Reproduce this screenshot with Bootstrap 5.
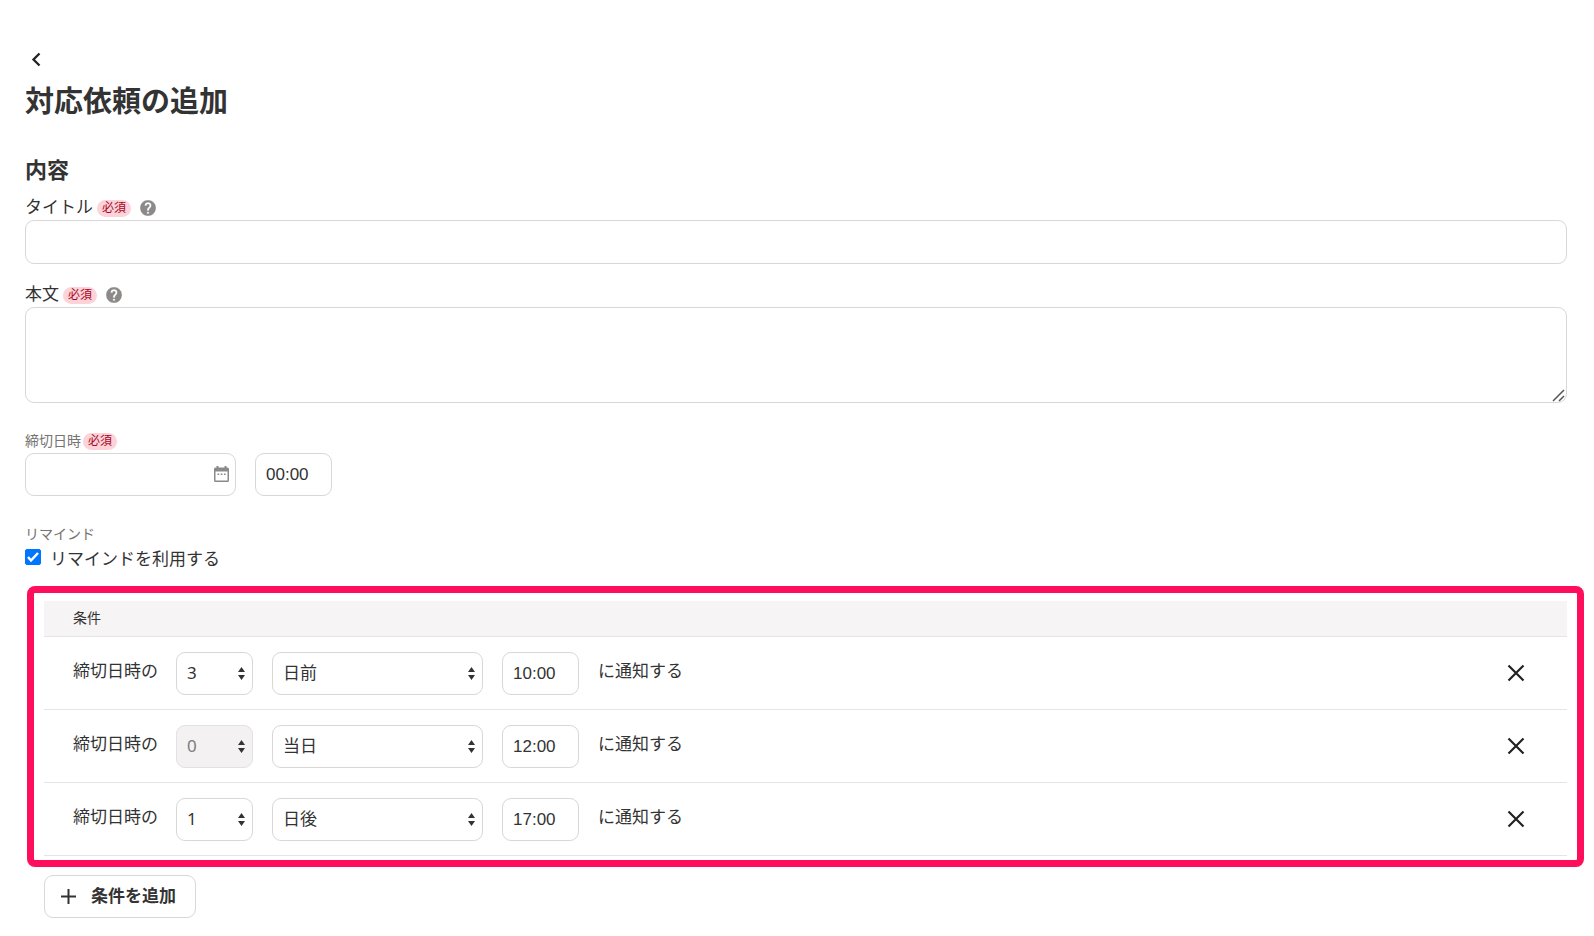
<!DOCTYPE html>
<html lang="ja">
<head>
<meta charset="utf-8">
<meta name="viewport" content="width=device-width, initial-scale=1">
<title>対応依頼の追加</title>
<link href="https://cdn.jsdelivr.net/npm/bootstrap@5.3.0/dist/css/bootstrap.min.css" rel="stylesheet">
<style>
  body { font-family: "Liberation Sans", "Noto Sans CJK JP", sans-serif; font-size: 17px; line-height: 24px; color: #333; background: #fff; }
  .page { padding: 48px 27px 16px 25px; }
  .page-title { font-size: 29px; line-height: 40px; margin: 10px 0 33px; }
  .section-title { font-size: 22px; line-height: 32px; margin: 0 0 9px; }
  .icon-btn { width: 24px; height: 24px; color: #222; background: none; }
  .field-label { height: 24px; }
  .field-label.minor, .minor-text { font-size: 14px; color: #767370; }
  .next-field { margin-top: 19px; }
  .next-group { margin-top: 26px; }
  .required-tag { font-size: 12px; line-height: 17px; padding: 0 5px; border-radius: 9px; background: #fbd3d9; color: #a8071f; }
  .minor .required-tag { margin-left: 2px; }
  .help-btn { width: 16px; height: 16px; color: #8c8989; background: none; margin-left: 9px; }
  .form-control, .form-select { height: 43px; border: 1px solid #d9d7d7; border-radius: 9px; font-size: 17px; line-height: 24px; padding: 8px 10px; color: #333; }
  .form-control.title-box { height: 44px; }
  textarea.form-control { height: 96px; min-height: 96px; }
  textarea::-webkit-resizer { background: url("data:image/svg+xml,%3Csvg xmlns='http://www.w3.org/2000/svg' viewBox='0 0 15 15'%3E%3Cpath d='M2 14L13 3M8 14L13 9' stroke='%23555' stroke-width='1.500'/%3E%3C/svg%3E") center / 15px 15px no-repeat; }
  .form-select { font-family: "Noto Sans", "Noto Sans CJK JP", sans-serif; padding: 7px 20px 9px 10px; background-image: url("data:image/svg+xml,%3Csvg xmlns='http://www.w3.org/2000/svg' viewBox='0 0 7 13'%3E%3Cpath d='M0 5L3.500 0L7 5zM0 8L3.500 13L7 8z' fill='%23333'/%3E%3C/svg%3E"); background-size: 7px 13px; background-position: right 7px center; }
  .form-select:disabled { background-color: #f3f1f2; border-color: #e3e1e1; color: #7d7b7b; opacity: 1; }
  .w-short { width: 77px; }
  .w-long { width: 211px; }
  .gap-control { gap: 19px; }
  .rule-lead { width: 84px; }
  .rule-text { padding-bottom: 3px; }
  .calendar { top: 13px; right: 7px; width: 15px; height: 16px; color: #8c8989; background: none; }
  .form-check-input.remind-check { width: 16px; height: 16px; margin: 3px 9px 0 0; border-radius: 2px; }
  .form-check-input.remind-check:checked { background-color: #0075ff; border-color: #0075ff; background-image: url("data:image/svg+xml,%3Csvg xmlns='http://www.w3.org/2000/svg' viewBox='0 0 14 14'%3E%3Cpath d='M2 7L5 10.500L12 3' fill='none' stroke='%23fff' stroke-width='2.500'/%3E%3C/svg%3E"); }
  .remind-row { padding-bottom: 14px; }
  .remind-row label { padding-top: 2px; }
  .rules-frame { border: 7px solid #ff0f5b; border-radius: 8px; padding: 8px 10px 4px; margin: 0 -17px 8px 2px; }
  .rules-table { color: #333; border-color: #e6e4e4; }
  .rules-table th { font-size: 14px; font-weight: 400; line-height: 19px; padding: 8px 29px; background: #f6f4f5; }
  .rules-table td { padding: 15px 39px 14px 29px; }
  .remove-btn { margin-bottom: 2px; }
  .add-row { padding-left: 19px; }
  .add-btn { height: 43px; padding: 0 19px 0 15px; border: 1px solid #d9d7d7; border-radius: 9px; font-size: 17px; color: #333; gap: 14px; }
</style>
</head>
<body>
<main class="page container-fluid">
  <button type="button" class="icon-btn border-0 p-0 d-block" aria-label="戻る">
    <svg class="d-block" width="24" height="24" viewBox="0 0 24 24" fill="none" stroke="currentColor" stroke-width="2.300"><path d="M14.500 5.500L8.500 11.500L14.500 17.500"/></svg>
  </button>
  <h1 class="page-title fw-bold">対応依頼の追加</h1>

  <h2 class="section-title fw-bold">内容</h2>
  <div class="field-label d-flex align-items-center">
    <label for="title">タイトル</label><span class="required-tag ms-1">必須</span>
    <button type="button" class="help-btn border-0 p-0" aria-label="タイトルのヘルプ"><svg class="d-block" width="16" height="16" viewBox="2 2 20 20" fill="currentColor"><path d="M12 2a10 10 0 1 0 0 20a10 10 0 0 0 0-20zm1 17h-2v-2h2zm2.07-7.75l-.9.92C13.45 12.9 13 13.5 13 15h-2v-.5c0-1.1.45-2.1 1.17-2.83l1.24-1.26A2 2 0 1 0 10 9H8a4 4 0 1 1 8 0c0 .88-.36 1.68-.93 2.25z" stroke="#fff" stroke-width=".3"/></svg></button>
  </div>
  <input type="text" id="title" class="form-control title-box">

  <div class="field-label next-field d-flex align-items-center">
    <label for="bodytext">本文</label><span class="required-tag ms-1">必須</span>
    <button type="button" class="help-btn border-0 p-0" aria-label="本文のヘルプ"><svg class="d-block" width="16" height="16" viewBox="2 2 20 20" fill="currentColor"><path d="M12 2a10 10 0 1 0 0 20a10 10 0 0 0 0-20zm1 17h-2v-2h2zm2.07-7.75l-.9.92C13.45 12.9 13 13.5 13 15h-2v-.5c0-1.1.45-2.1 1.17-2.83l1.24-1.26A2 2 0 1 0 10 9H8a4 4 0 1 1 8 0c0 .88-.36 1.68-.93 2.25z" stroke="#fff" stroke-width=".3"/></svg></button>
  </div>
  <textarea id="bodytext" class="form-control d-block"></textarea>

  <div class="field-label minor next-group d-flex align-items-center">
    <label for="due-date">締切日時</label><span class="required-tag">必須</span>
  </div>
  <div class="d-flex gap-control">
    <div class="position-relative w-long">
      <input type="text" id="due-date" class="form-control">
      <button type="button" class="calendar position-absolute border-0 p-0" aria-label="日付を選択"><svg class="d-block" width="15" height="16" viewBox="0 0 15 16" fill="currentColor"><path fill-rule="evenodd" d="M2.500 0h2v1.500h6V0h2v1.500h1A1.500 1.500 0 0 1 15 3v11.500a1.500 1.500 0 0 1-1.500 1.500h-12A1.500 1.500 0 0 1 0 14.500V3a1.500 1.500 0 0 1 1.500-1.500h1zM1.500 5.500v9h12v-9zM3.500 7.500h1.700V9H3.500zM6.700 7.500h1.700V9H6.700zM9.900 7.500h1.700V9H9.900z"/></svg></button>
    </div>
    <input type="text" class="form-control w-short" value="00:00" aria-label="締切時刻">
  </div>

  <div class="minor-text next-group">リマインド</div>
  <div class="remind-row d-flex">
    <input type="checkbox" id="remind" class="form-check-input remind-check" checked>
    <label for="remind">リマインドを利用する</label>
  </div>

  <section class="rules-frame" aria-label="リマインド条件">
    <table class="table rules-table mb-0">
      <thead><tr><th scope="col">条件</th></tr></thead>
      <tbody>
        <tr>
          <td>
            <div class="d-flex align-items-center gap-control">
              <span class="rule-lead rule-text text-nowrap">締切日時の</span>
              <select class="form-select w-short" aria-label="日数"><option>3</option></select>
              <select class="form-select w-long" aria-label="基準日"><option>日前</option></select>
              <input type="text" class="form-control w-short" value="10:00" aria-label="通知時刻">
              <span class="rule-text">に通知する</span>
              <button type="button" class="icon-btn remove-btn border-0 p-0 ms-auto" aria-label="条件を削除"><svg class="d-block" width="24" height="24" viewBox="0 0 24 24" stroke="currentColor" stroke-width="2.200"><path d="M4.500 4.500L19.500 19.500M19.500 4.500L4.500 19.500"/></svg></button>
            </div>
          </td>
        </tr>
        <tr>
          <td>
            <div class="d-flex align-items-center gap-control">
              <span class="rule-lead rule-text text-nowrap">締切日時の</span>
              <select class="form-select w-short" aria-label="日数" disabled><option>0</option></select>
              <select class="form-select w-long" aria-label="基準日"><option>当日</option></select>
              <input type="text" class="form-control w-short" value="12:00" aria-label="通知時刻">
              <span class="rule-text">に通知する</span>
              <button type="button" class="icon-btn remove-btn border-0 p-0 ms-auto" aria-label="条件を削除"><svg class="d-block" width="24" height="24" viewBox="0 0 24 24" stroke="currentColor" stroke-width="2.200"><path d="M4.500 4.500L19.500 19.500M19.500 4.500L4.500 19.500"/></svg></button>
            </div>
          </td>
        </tr>
        <tr>
          <td>
            <div class="d-flex align-items-center gap-control">
              <span class="rule-lead rule-text text-nowrap">締切日時の</span>
              <select class="form-select w-short" aria-label="日数"><option>1</option></select>
              <select class="form-select w-long" aria-label="基準日"><option>日後</option></select>
              <input type="text" class="form-control w-short" value="17:00" aria-label="通知時刻">
              <span class="rule-text">に通知する</span>
              <button type="button" class="icon-btn remove-btn border-0 p-0 ms-auto" aria-label="条件を削除"><svg class="d-block" width="24" height="24" viewBox="0 0 24 24" stroke="currentColor" stroke-width="2.200"><path d="M4.500 4.500L19.500 19.500M19.500 4.500L4.500 19.500"/></svg></button>
            </div>
          </td>
        </tr>
      </tbody>
    </table>
  </section>

  <div class="add-row">
    <button type="button" class="add-btn btn bg-white fw-bold d-inline-flex align-items-center">
      <svg width="17" height="17" viewBox="0 0 17 17" stroke="currentColor" stroke-width="2"><path d="M8.500 1V16M1 8.500H16"/></svg>条件を追加
    </button>
  </div>
</main>
<script src="https://cdn.jsdelivr.net/npm/bootstrap@5.3.0/dist/js/bootstrap.bundle.min.js"></script>
</body>
</html>
